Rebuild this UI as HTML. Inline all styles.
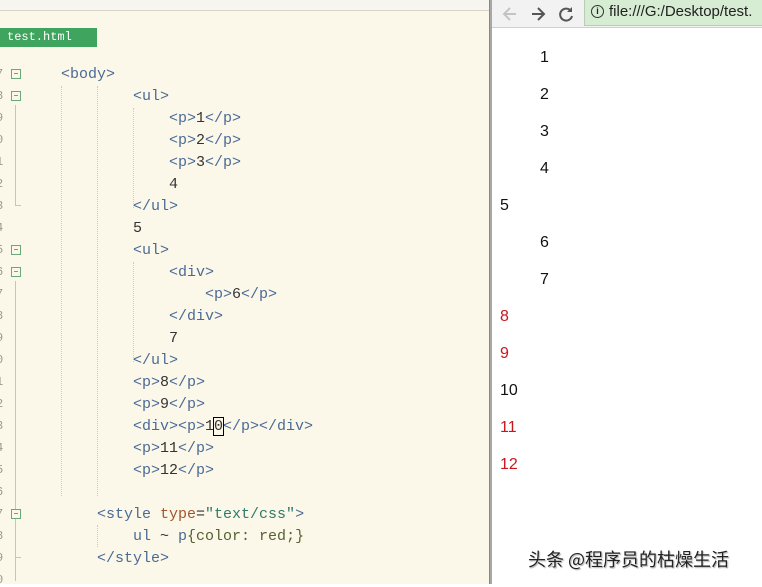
<!DOCTYPE html>
<html><head><meta charset="utf-8"><style>
*{margin:0;padding:0;box-sizing:border-box}
body{width:762px;height:584px;position:relative;overflow:hidden;background:#fff;font-family:"Liberation Sans",sans-serif}
#ed{position:absolute;left:0;top:0;width:489px;height:584px;background:#fcf8e9}
#tb{position:absolute;left:0;top:0;width:489px;height:11px;background:#f7f5ef;border-bottom:1px solid #d8d4c8}
#tab{position:absolute;left:0;top:28px;width:97px;height:19px;background:#3fa45e;color:#fff;font:12px "Liberation Mono",monospace;line-height:19px;padding-left:7px}
.ln{position:absolute;left:-4px;font:12px "Liberation Mono",monospace;color:#9a9a8a}
.fb{position:absolute;left:11px;width:10px;height:10px;border:1px solid #6aa87a;background:#fcf8e9}
.fb:after{content:"";position:absolute;left:2px;top:3px;width:4px;height:1px;background:#6aa87a}
.c{position:absolute;font:15px "Liberation Mono",monospace;color:#333;white-space:pre;line-height:22px;margin-top:1px}
.t{color:#4a6a96}.a{color:#a5532a}.s{color:#2f7a6a}.g{color:#55612f}
.gd{position:absolute;width:0;border-left:1px dotted #cfcbbb}
#div{position:absolute;left:489px;top:0;width:3px;height:584px;background:#a8a8a8;border-left:1px solid #888}
#bt{position:absolute;left:492px;top:0;width:270px;height:28px;background:#f2f2f2;border-bottom:1px solid #cfcfcf}
#url{position:absolute;left:584px;top:0;width:180px;height:26px;background:#d6ecd3;border:1px solid #b9cdb6;border-top:none;font-size:15px;color:#222;line-height:24px;padding-left:24px;white-space:nowrap;overflow:hidden}
.n{position:absolute;font-size:16px;color:#111;line-height:20px;margin-top:1px}
.r{color:#c8161d}
#wm{position:absolute;left:528px;top:546px;font:18px "Noto Sans CJK SC",sans-serif;color:#222;text-shadow:0 0 2px #fff,1px 1px 1px #999;white-space:nowrap}
</style></head><body>
<div id="ed">
<div id="tb"></div>
<div id="tab">test.html</div>
<div class="gd" style="left:61px;top:86px;height:410px"></div>
<div class="gd" style="left:97px;top:86px;height:410px"></div>
<div class="gd" style="left:133px;top:108px;height:100px"></div>
<div class="gd" style="left:133px;top:262px;height:100px"></div>
<div class="gd" style="left:97px;top:525px;height:22px"></div>
<div style="position:absolute;left:15px;top:105px;width:1px;height:100px;background:#c9c5b5"></div>
<div style="position:absolute;left:15px;top:205px;width:6px;height:1px;background:#c9c5b5"></div>
<div style="position:absolute;left:15px;top:281px;width:1px;height:300px;background:#c9c5b5"></div>
<div style="position:absolute;left:15px;top:557px;width:6px;height:1px;background:#c9c5b5"></div>
<div class="ln" style="top:67px">7</div><div class="ln" style="top:89px">8</div><div class="ln" style="top:111px">9</div><div class="ln" style="top:133px">0</div><div class="ln" style="top:155px">1</div><div class="ln" style="top:177px">2</div><div class="ln" style="top:199px">3</div><div class="ln" style="top:221px">4</div><div class="ln" style="top:243px">5</div><div class="ln" style="top:265px">6</div><div class="ln" style="top:287px">7</div><div class="ln" style="top:309px">8</div><div class="ln" style="top:331px">9</div><div class="ln" style="top:353px">0</div><div class="ln" style="top:375px">1</div><div class="ln" style="top:397px">2</div><div class="ln" style="top:419px">3</div><div class="ln" style="top:441px">4</div><div class="ln" style="top:463px">5</div><div class="ln" style="top:485px">6</div><div class="ln" style="top:507px">7</div><div class="ln" style="top:529px">8</div><div class="ln" style="top:551px">9</div><div class="ln" style="top:573px">0</div>
<div class="fb" style="top:69px"></div><div class="fb" style="top:91px"></div><div class="fb" style="top:245px"></div><div class="fb" style="top:267px"></div><div class="fb" style="top:509px"></div>
<div class="c t" style="left:61px;top:63px">&lt;body&gt;</div>
<div class="c t" style="left:133px;top:85px">&lt;ul&gt;</div>
<div class="c" style="left:169px;top:107px"><span class="t">&lt;p&gt;</span>1<span class="t">&lt;/p&gt;</span></div>
<div class="c" style="left:169px;top:129px"><span class="t">&lt;p&gt;</span>2<span class="t">&lt;/p&gt;</span></div>
<div class="c" style="left:169px;top:151px"><span class="t">&lt;p&gt;</span>3<span class="t">&lt;/p&gt;</span></div>
<div class="c" style="left:169px;top:173px">4</div>
<div class="c t" style="left:133px;top:195px">&lt;/ul&gt;</div>
<div class="c" style="left:133px;top:217px">5</div>
<div class="c t" style="left:133px;top:239px">&lt;ul&gt;</div>
<div class="c t" style="left:169px;top:261px">&lt;div&gt;</div>
<div class="c" style="left:205px;top:283px"><span class="t">&lt;p&gt;</span>6<span class="t">&lt;/p&gt;</span></div>
<div class="c t" style="left:169px;top:305px">&lt;/div&gt;</div>
<div class="c" style="left:169px;top:327px">7</div>
<div class="c t" style="left:133px;top:349px">&lt;/ul&gt;</div>
<div class="c" style="left:133px;top:371px"><span class="t">&lt;p&gt;</span>8<span class="t">&lt;/p&gt;</span></div>
<div class="c" style="left:133px;top:393px"><span class="t">&lt;p&gt;</span>9<span class="t">&lt;/p&gt;</span></div>
<div class="c" style="left:133px;top:415px"><span class="t">&lt;div&gt;&lt;p&gt;</span>1<span style="outline:1px solid #000">0</span><span class="t">&lt;/p&gt;&lt;/div&gt;</span></div>
<div class="c" style="left:133px;top:437px"><span class="t">&lt;p&gt;</span>11<span class="t">&lt;/p&gt;</span></div>
<div class="c" style="left:133px;top:459px"><span class="t">&lt;p&gt;</span>12<span class="t">&lt;/p&gt;</span></div>
<div class="c" style="left:97px;top:503px"><span class="t">&lt;style </span><span class="a">type</span>=<span class="s">"text/css"</span><span class="t">&gt;</span></div>
<div class="c" style="left:133px;top:525px"><span class="t">ul</span> ~ <span class="t">p</span><span class="g">{color: red;}</span></div>
<div class="c t" style="left:97px;top:547px">&lt;/style&gt;</div>
</div>
<div id="div"></div>
<div id="bt">
<svg style="position:absolute;left:8px;top:4px" width="20" height="20" viewBox="0 0 20 20"><path d="M16 10H5M10 4L4 10l6 6" stroke="#c4c4c4" stroke-width="2" fill="none"/></svg>
<svg style="position:absolute;left:36px;top:4px" width="20" height="20" viewBox="0 0 20 20"><path d="M4 10h11M10 4l6 6-6 6" stroke="#555" stroke-width="2" fill="none"/></svg>
<svg style="position:absolute;left:64px;top:4px" width="20" height="20" viewBox="0 0 20 20"><path d="M15 7A6 6 0 1 0 16 12" stroke="#555" stroke-width="2" fill="none"/><path d="M16 3v5h-5z" fill="#555"/></svg>
</div>
<div id="url"><span style="position:absolute;left:6px;top:5px;width:13px;height:13px;border:1.5px solid #333;border-radius:50%;font-size:9px;line-height:10px;text-align:center;font-weight:bold">i</span>file:///G:/Desktop/test.</div>
<div class="n" style="left:540px;top:47px">1</div>
<div class="n" style="left:540px;top:84px">2</div>
<div class="n" style="left:540px;top:121px">3</div>
<div class="n" style="left:540px;top:158px">4</div>
<div class="n" style="left:500px;top:195px">5</div>
<div class="n" style="left:540px;top:232px">6</div>
<div class="n" style="left:540px;top:269px">7</div>
<div class="n r" style="left:500px;top:306px">8</div>
<div class="n r" style="left:500px;top:343px">9</div>
<div class="n" style="left:500px;top:380px">10</div>
<div class="n r" style="left:500px;top:417px">11</div>
<div class="n r" style="left:500px;top:454px">12</div>
<div id="wm">头条 @程序员的枯燥生活</div>
</body></html>
